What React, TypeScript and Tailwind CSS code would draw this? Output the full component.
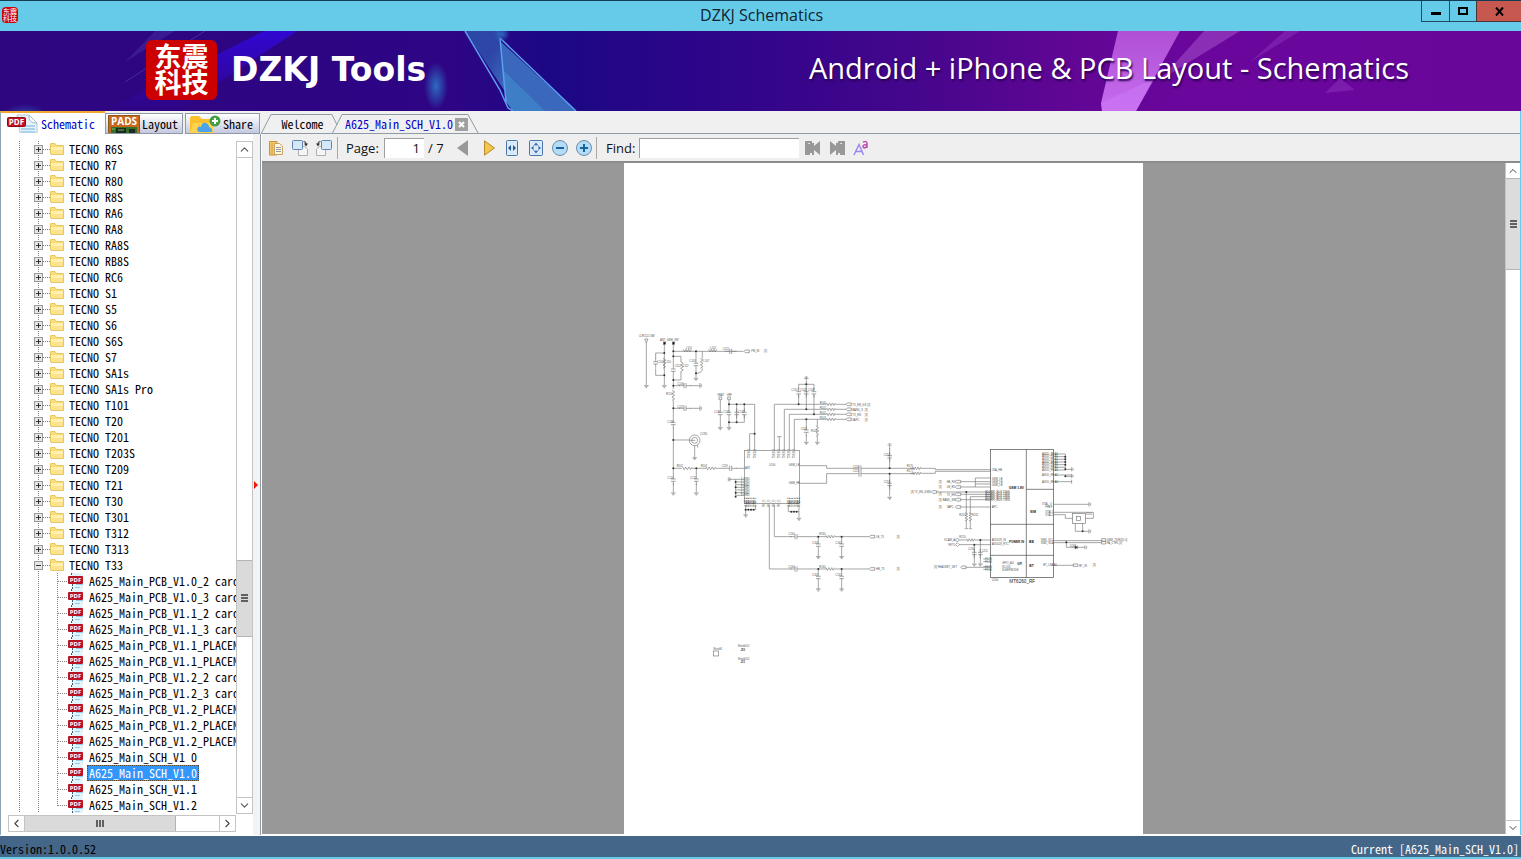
import type { ReactNode } from "react"
import { ChevronDown, ChevronLeft, ChevronRight, ChevronUp } from "lucide-react"

const MONO = "font-['Noto_Sans_Mono_CJK_SC','Liberation_Mono',monospace] text-[12px] leading-4"
const UI = "font-['Open_Sans','Noto_Sans',sans-serif]"

const folders = [
  "R6S", "R7", "R80", "R8S", "RA6", "RA8", "RA8S", "RB8S", "RC6", "S1", "S5", "S6", "S6S", "S7",
  "SA1s", "SA1s Pro", "T101", "T20", "T201", "T203S", "T209", "T21", "T30", "T301", "T312", "T313", "T33",
]

const files = [
  "A625_Main_PCB_V1.0_2 card",
  "A625_Main_PCB_V1.0_3 card",
  "A625_Main_PCB_V1.1_2 card",
  "A625_Main_PCB_V1.1_3 card",
  "A625_Main_PCB_V1.1_PLACEMENT",
  "A625_Main_PCB_V1.1_PLACEMENT",
  "A625_Main_PCB_V1.2_2 card",
  "A625_Main_PCB_V1.2_3 card",
  "A625_Main_PCB_V1.2_PLACEMENT",
  "A625_Main_PCB_V1.2_PLACEMENT",
  "A625_Main_PCB_V1.2_PLACEMENT",
  "A625_Main_SCH_V1 0",
  "A625_Main_SCH_V1.0",
  "A625_Main_SCH_V1.1",
  "A625_Main_SCH_V1.2",
]

function Seal({ small }: { small?: boolean }) {
  return small ? (
    <div className="w-4 h-4 rounded-sm bg-[#c8000a] text-white text-[7px] leading-[7px] text-center pt-px font-['Noto_Sans_CJK_SC',sans-serif]">
      东震<br />科技
    </div>
  ) : (
    <div className="w-[71px] h-[60px] rounded-md bg-[#cc0000] text-white font-bold text-[27px] leading-[26px] text-center pt-[3px] font-['Noto_Sans_CJK_SC',sans-serif]">
      <span className="block">东震</span>
      <span className="block">科技</span>
    </div>
  )
}

function TitleBar() {
  return (
    <header className="flex items-start h-[31px] shrink-0 border-t border-[#123d55] bg-[#66cbe9]">
      <div className="flex-1 pl-[2px] pt-[6px]">
        <Seal small />
      </div>
      <h1 className={`${UI} text-[16px] leading-[29px] text-[#10232e]`}>DZKJ Schematics</h1>
      <div className="flex flex-1 justify-end">
        <button aria-label="Minimize" className="w-[29px] h-[21px] border border-t-0 border-[#234a5e] flex justify-center items-end pb-[6px]">
          <span className="w-[10px] h-[3px] bg-black" />
        </button>
        <button aria-label="Maximize" className="w-[26px] h-[21px] border-b border-[#234a5e] flex justify-center items-center">
          <span className="w-[10px] h-2 border-2 border-black" />
        </button>
        <button aria-label="Close" className="w-[45px] h-[21px] border-b border-l border-[#4a3438] bg-[#c75850] flex justify-center items-center">
          <svg width="9" height="9" viewBox="0 0 9 9" stroke="#000" strokeWidth="2">
            <path d="M1 0.5L8 8.5M8 0.5L1 8.5" />
          </svg>
        </button>
      </div>
    </header>
  )
}

function BannerArt() {
  return (
    <svg className="absolute inset-0 w-full h-full" viewBox="0 31 1521 80" preserveAspectRatio="none" aria-hidden="true">
      <defs>
        <linearGradient id="sky">
          <stop offset="0" stopColor="#2e0680" />
          <stop offset=".3" stopColor="#2d0585" />
          <stop offset=".36" stopColor="#1c0883" />
          <stop offset=".46" stopColor="#2c0589" />
          <stop offset=".6" stopColor="#44068c" />
          <stop offset=".7" stopColor="#600694" />
          <stop offset=".78" stopColor="#6a069c" />
          <stop offset="1" stopColor="#69069a" />
        </linearGradient>
        <linearGradient id="shard" x1="0" y1="0" x2="1" y2="1">
          <stop offset="0" stopColor="#2b58ae" />
          <stop offset=".5" stopColor="#3155b0" />
          <stop offset="1" stopColor="#4088cc" />
        </linearGradient>
        <linearGradient id="beam" x1="0" y1="0" x2="0" y2="1">
          <stop offset="0" stopColor="#3208e6" />
          <stop offset="1" stopColor="#2e0683" />
        </linearGradient>
        <linearGradient id="pink" x1="0" y1="0" x2="0" y2="1">
          <stop offset="0" stopColor="#b050d4" />
          <stop offset="1" stopColor="#c66cf0" />
        </linearGradient>
        <radialGradient id="glow">
          <stop offset="0" stopColor="#2d6bc0" />
          <stop offset="1" stopColor="#2d6bc0" stopOpacity="0" />
        </radialGradient>
      </defs>
      <rect y="31" width="1521" height="80" fill="url(#sky)" />
      <path d="M264 31H297L175 111H105Z" fill="url(#beam)" opacity=".8" />
      <path d="M155 31H175L125 62Z" fill="#4326a0" opacity=".6" />
      <path d="M205 31L125 82" stroke="#5144b8" opacity=".6" />
      <ellipse cx="436" cy="86" rx="12" ry="24" fill="url(#glow)" />
      <ellipse cx="25" cy="114" rx="22" ry="10" fill="url(#glow)" opacity=".6" />
      <path d="M465 31H500L506 93Z" fill="url(#shard)" opacity=".8" />
      <path d="M500 41L576 111H513L506 102Z" fill="#3a68bc" />
      <path d="M503 70L545 111H513L506 102Z" fill="#4088cc" opacity=".7" />
      <path d="M465 31L500 90L508 108L513 111M500 38L506 102M500 38L576 111" stroke="#5c9df0" fill="none" strokeWidth="1.5" />
      <circle cx="502" cy="34" r="8" fill="url(#glow)" />
      <path d="M1118 31H1180L1136 111H1102L1101 103Z" fill="url(#pink)" />
      <path d="M1101 103L1155 78L1136 111H1102Z" fill="#cc7af6" opacity=".5" />
      <path d="M1204 31H1240L1160 80Z" fill="#9338bd" opacity=".8" />
      <path d="M1285 31H1300L1250 62Z" fill="#8328b4" opacity=".7" />
      <path d="M1340 78L1355 90L1325 93Z" fill="#8122b0" opacity=".8" />
    </svg>
  )
}

function Banner() {
  return (
    <section className="relative h-20 shrink-0 overflow-hidden bg-[#2e0680]">
      <BannerArt />
      <div className="relative flex items-center justify-between h-full pl-[146px] pr-[112px] pb-[2px] text-white">
        <div className="flex items-center gap-[14px]">
          <Seal />
          <p className="font-['DejaVu_Sans',sans-serif] font-bold text-[33px] leading-[60px]">DZKJ Tools</p>
        </div>
        <p className={`${UI} text-[29px] leading-[60px] pb-1 [text-shadow:1px_2px_2px_#2a0050]`}>
          Android + iPhone &amp; PCB Layout - Schematics
        </p>
      </div>
    </section>
  )
}

function PdfTabIcon() {
  return (
    <svg width="32" height="19" viewBox="0 0 32 19">
      <path d="M10 1H22L30 9V19H13Z" fill="#e9f2fa" stroke="#b4c8d8" />
      <path d="M22 1C22 6 23 9 30 9Z" fill="#fff" stroke="#9db8cf" />
      <path d="M19 12H28M14 15H28M14 18H28" stroke="#a9d2ee" strokeWidth="2" />
      <rect x=".5" y="3.5" width="18" height="9" rx="1" fill="#c01420" stroke="#8d0b14" />
      <text x="9.5" y="11" fontSize="8" fontWeight="bold" fill="#fff" textAnchor="middle" fontFamily="Open Sans">PDF</text>
    </svg>
  )
}

function PadsIcon() {
  return (
    <svg width="32" height="18" viewBox="0 0 32 18">
      <rect width="32" height="18" fill="#c9661f" />
      <rect x=".5" y=".5" width="31" height="18" fill="none" stroke="#8e5a18" />
      <text x="16" y="10" fontSize="10" fontWeight="bold" fill="#fff" textAnchor="middle" fontFamily="Open Sans">PADS</text>
      <path d="M3 12H29V18H3Z" fill="#35702a" />
      <path d="M8 13H18V18H8ZM21 14H27V18H21Z" fill="#1c2b22" />
      <path d="M4 14H7M10 15H16" stroke="#7fbb55" />
    </svg>
  )
}

function ShareIcon() {
  return (
    <svg width="32" height="18" viewBox="0 0 32 18">
      <path d="M1 18V3Q1 1 3 1H10L13 4H22Q24 4 24 6V18Z" fill="#fbc02d" />
      <path d="M1 18L4 8H24V18Z" fill="#ffd34d" />
      <path d="M10 17Q7 16 9 12Q11 11 12 12Q13 7 17 8Q20 9 20 12Q24 13 23 17Z" fill="#4da3e8" />
      <circle cx="26" cy="6" r="5.5" fill="#43a047" />
      <path d="M26 3V9M23 6H29" stroke="#fff" strokeWidth="2" />
    </svg>
  )
}

function FolderIcon() {
  return (
    <svg width="14" height="12" viewBox="0 0 14 12" className="shrink-0">
      <path d="M.5 11V1Q.5 .5 1 .5H5L6.5 2.500H13Q13.500 2.500 13.500 3V11.500H1Z" fill="#f8dc78" stroke="#e5c566" />
      <path d="M1 4H13V7H1Z" fill="#fff0ae" />
      <path d="M1 7H13V11H1Z" fill="#fbe48c" />
    </svg>
  )
}

function PdfIcon() {
  return (
    <svg width="16" height="16" viewBox="0 0 16 16" className="shrink-0">
      <path d="M4 0H13L15 2V16H4Z" fill="#e3f3fb" />
      <path d="M8 11.500H15M7 14.500H12" stroke="#8fcdee" />
      <path d="M4.500 11V16M3.500 0V3" stroke="#3c5d80" strokeDasharray="2 1" />
      <rect y="3" width="15" height="8" rx="1" fill="#b81225" />
      <text x="7.500" y="9" fontSize="6" fontWeight="bold" fill="#fff" textAnchor="middle" fontFamily="Open Sans">PDF</text>
    </svg>
  )
}

function FolderRow({ name, open }: { name: string; open?: boolean }) {
  return (
    <li role="treeitem" aria-expanded={!!open} className="flex items-center h-4">
      <svg width="50" height="16" viewBox="0 0 50 16" className="shrink-0" aria-hidden="true">
        <path d="M19.500 0V16M38.500 0V16M43 8.500H50" stroke="#808080" strokeDasharray="1 1" />
        <rect x="34.500" y="4.500" width="8" height="8" fill="#e6e6e6" stroke="#9a9a9a" />
        <path d={open ? "M36 8.500H41" : "M36 8.500H41M38.500 6V11"} stroke="#333" />
      </svg>
      <FolderIcon />
      <span className="pl-[5px] whitespace-pre">TECNO {name}</span>
    </li>
  )
}

function FileRow({ name, selected, last }: { name: string; selected: boolean; last: boolean }) {
  return (
    <li role="treeitem" aria-selected={selected} className="flex items-center h-4">
      <svg width="68" height="16" viewBox="0 0 68 16" className="shrink-0" aria-hidden="true">
        <path d="M19.500 0V16M38.500 0V16M58 8.500H68" stroke="#808080" strokeDasharray="1 1" />
        <path d={last ? "M57.500 0V9" : "M57.500 0V16"} stroke="#808080" strokeDasharray="1 1" />
      </svg>
      <PdfIcon />
      <span
        className={
          selected
            ? "ml-[3px] px-px h-4 leading-[14px] whitespace-pre border border-dotted border-[#5a4a30] bg-[#3297fd] text-white"
            : "ml-[3px] px-[2px] whitespace-pre"
        }
      >
        {name}
      </span>
    </li>
  )
}

function SidePanel() {
  return (
    <aside className={`${MONO} flex flex-col w-[253px] shrink-0 border-l border-[#8fa6b8] bg-white text-black`}>
      <div className="flex-1 min-h-0 flex pt-[7px]">
        <ul role="tree" aria-label="Schematics" className="flex-1 min-w-0 overflow-hidden -ml-px">
          {folders.map((f) => (
            <FolderRow key={f} name={f} open={f === "T33"} />
          ))}
          {files.map((f, i) => (
            <FileRow key={i} name={f} selected={f === "A625_Main_SCH_V1.0"} last={i === files.length - 1} />
          ))}
        </ul>
        <div className="w-[17px] flex flex-col border border-[#c4c4c4]">
          <button aria-label="Scroll up" className="h-4 flex items-center justify-center border-b border-[#c4c4c4]">
            <ChevronUp size={13} color="#555" />
          </button>
          <div className="flex-[404]" />
          <div className="flex-[75] flex flex-col items-center justify-center gap-px border-y border-[#b4b4b4] bg-[#dadada]">
            <Grip />
          </div>
          <div className="flex-[161]" />
          <button aria-label="Scroll down" className="h-4 flex items-center justify-center border-t border-[#c4c4c4]">
            <ChevronDown size={13} color="#555" />
          </button>
        </div>
      </div>
      <div className="flex h-[17px] mt-px mb-[3px] ml-[7px] mr-[17px] border border-[#c4c4c4]">
        <button aria-label="Scroll left" className="w-4 flex items-center justify-center border-r border-[#c4c4c4]">
          <ChevronLeft size={13} color="#444" />
        </button>
        <div className="flex-[151] flex items-center justify-center gap-px border-r border-[#b4b4b4] bg-[#dadada]">
          <span className="w-[2px] h-[7px] bg-[#606060]" />
          <span className="w-[2px] h-[7px] bg-[#606060]" />
          <span className="w-[2px] h-[7px] bg-[#606060]" />
        </div>
        <div className="flex-[43]" />
        <button aria-label="Scroll right" className="w-4 flex items-center justify-center border-l border-[#c4c4c4]">
          <ChevronRight size={13} color="#444" />
        </button>
      </div>
    </aside>
  )
}

function Grip() {
  return (
    <>
      <span className="w-[7px] h-[2px] bg-[#606060]" />
      <span className="w-[7px] h-[2px] bg-[#606060]" />
      <span className="w-[7px] h-[2px] bg-[#606060]" />
    </>
  )
}

function SideTabs() {
  return (
    <nav className={`${MONO} flex items-end w-[261px] shrink-0 text-black`} role="tablist" aria-label="Libraries">
      <button role="tab" aria-selected="true" className="flex items-center h-[23px] w-[105px] pl-[6px] gap-[2px] border-t-2 border-l border-t-[#f0a830] border-l-[#8fa6b8] bg-white text-[#0000c8]">
        <PdfTabIcon />
        Schematic
      </button>
      <button role="tab" className="flex items-center h-[21px] w-[78px] mr-[2px] pl-[2px] gap-[2px] border border-[#8f9aa8] bg-linear-to-b from-white to-[#c5c9e0]">
        <PadsIcon />
        Layout
      </button>
      <button role="tab" className="flex items-center h-[21px] w-[75px] pl-[3px] gap-[2px] border border-[#8f9aa8] bg-linear-to-b from-white to-[#c5c9e0]">
        <ShareIcon />
        Share
      </button>
    </nav>
  )
}

function DocTabs() {
  return (
    <nav className={`${MONO} flex flex-1 items-end border-b border-[#8f9ca5] text-black`} role="tablist" aria-label="Documents">
      <svg width="12" height="19" viewBox="0 0 12 19" fill="none" stroke="#8f9ca5">
        <path d="M0.500 19L10 0.500H12" />
      </svg>
      <button role="tab" className="h-[19px] w-[59px] border-t border-[#8f9ca5] bg-[#f0f0f0] text-center">Welcome</button>
      <svg width="12" height="19" viewBox="0 0 12 19" fill="none" stroke="#8f9ca5">
        <path d="M0 .500L5 11M0.500 19L10 0.500H12" />
      </svg>
      <div className="flex items-center h-[19px] pl-px gap-[2px] border-t border-[#8f9ca5]">
        <button role="tab" aria-selected="true" className="text-[#0000c8]">A625_Main_SCH_V1.0</button>
        <button aria-label="Close tab" className="w-[13px] h-[13px] bg-[#a0a0a0] flex items-center justify-center">
          <svg width="7" height="7" viewBox="0 0 7 7" stroke="#fff" strokeWidth="2">
            <path d="M1 1L6 6M6 1L1 6" />
          </svg>
        </button>
      </div>
      <svg width="11" height="19" viewBox="0 0 11 19" fill="none" stroke="#8f9ca5">
        <path d="M0 .500L10 19" />
      </svg>
    </nav>
  )
}

function ToolButton({ label, children }: { label: string; children: ReactNode }) {
  return (
    <button aria-label={label} className="w-6 h-6 flex items-center justify-center">
      {children}
    </button>
  )
}

function Icon({ children }: { children: ReactNode }) {
  return (
    <svg width="16" height="16" viewBox="0 0 16 16" fill="none">
      {children}
    </svg>
  )
}

function RotateArt() {
  return (
    <>
      <path d="M6.500 6.500H12.500L15.500 9V15.500H6.500Z" fill="#f4f4f4" stroke="#b0b0b0" />
      <rect x=".500" y=".500" width="10" height="9" rx="1" fill="#d4e8fa" stroke="#6384ad" />
      <path d="M11.500 1.500Q14.500 1.500 14 4" stroke="#333" />
      <path d="M12 3.500H16L14 6.500Z" fill="#333" />
    </>
  )
}

function Toolbar() {
  return (
    <div className={`${UI} flex items-center h-[29px] pl-[2px] shrink-0 bg-[#efefef] border-b-2 border-[#8c8c8c] text-[13px] leading-5 text-[#111]`}>
      <ToolButton label="Bookmarks">
        <Icon>
          <path d="M1.500 1.500H9V15H1.500Z" fill="#f2c567" stroke="#c9943a" />
          <path d="M4 3V15" stroke="#d8a445" />
          <path d="M6.500 3.500H11.500L14.500 6V14.500H6.500Z" fill="#fff6dd" stroke="#c9a560" />
          <path d="M8 7.500H13M8 9.500H13M8 11.500H13" stroke="#8a9cb4" />
        </Icon>
      </ToolButton>
      <ToolButton label="Rotate right">
        <Icon>
          <RotateArt />
        </Icon>
      </ToolButton>
      <ToolButton label="Rotate left">
        <Icon>
          <g transform="matrix(-1 0 0 1 16 0)">
            <RotateArt />
          </g>
        </Icon>
      </ToolButton>
      <span className="w-px h-[22px] bg-[#b0a8a0] ml-px mr-[8px]" />
      <label htmlFor="page" className="w-[38px]">Page:</label>
      <input id="page" defaultValue="1" className="w-10 h-5 pr-1 text-right bg-white border-t border-l border-[#a0a0a0]" />
      <span className="w-[27px] pl-1 whitespace-pre">/ 7</span>
      <ToolButton label="Previous page">
        <svg width="12" height="16" viewBox="0 0 12 16">
          <path d="M11 0V16L0 8Z" fill="#989898" />
        </svg>
      </ToolButton>
      <span className="w-[2px]" />
      <ToolButton label="Next page">
        <svg width="12" height="16" viewBox="0 0 12 16">
          <path d="M1.500 .800V15.200L11.500 8Z" fill="#f3c64d" stroke="#b98a2a" />
        </svg>
      </ToolButton>
      <span className="flex -ml-px">
        <ToolButton label="Fit width">
          <Icon>
            <rect x="2.500" y=".500" width="11" height="15" rx="1" fill="#d9ebfb" stroke="#4d76a8" />
            <path d="M4 8L7 5V11ZM12 8L9 5V11Z" fill="#24568f" />
          </Icon>
        </ToolButton>
        <ToolButton label="Fit page">
          <Icon>
            <rect x="1.500" y=".500" width="13" height="15" rx="1" fill="#d9ebfb" stroke="#4d76a8" />
            <path d="M8 2.500L10 5H6ZM8 13.500L10 11H6ZM3 8L5.500 6V10ZM13 8L10.500 6V10Z" fill="#3a6ba5" />
            <rect x="5.500" y="5.500" width="5" height="5" stroke="#6a93c2" strokeDasharray="1 1" />
          </Icon>
        </ToolButton>
        <ToolButton label="Zoom out">
          <Icon>
            <circle cx="8" cy="8" r="7.500" fill="#b5dcf7" stroke="#6b8fb0" />
            <path d="M4 8H12" stroke="#15639f" strokeWidth="2" />
          </Icon>
        </ToolButton>
        <ToolButton label="Zoom in">
          <Icon>
            <circle cx="8" cy="8" r="7.500" fill="#b5dcf7" stroke="#6b8fb0" />
            <path d="M4 8H12M8 4V12" stroke="#15639f" strokeWidth="2" />
          </Icon>
        </ToolButton>
      </span>
      <span className="w-px h-[22px] bg-[#b0a8a0] mr-[9px]" />
      <label htmlFor="find" className="w-[33px]">Find:</label>
      <input id="find" className="w-[160px] h-5 px-1 bg-white border-t border-l border-[#a0a0a0]" />
      <span className="w-[2px]" />
      <ToolButton label="Find previous">
        <Icon>
          <path d="M0 1H7V3H9V6L15 1V15L9 10V15H7V13H5V15H0Z" fill="#989898" />
          <path d="M3 3.500H5" stroke="#e0e0e0" />
        </Icon>
      </ToolButton>
      <ToolButton label="Find next">
        <Icon>
          <path d="M16 1H9V3H7V6L1 1V15L7 10V15H9V13H11V15H16Z" fill="#989898" />
          <path d="M11 3.500H13" stroke="#e0e0e0" />
        </Icon>
      </ToolButton>
      <ToolButton label="Match case">
        <Icon>
          <path d="M1 15L6 4.500L10.500 15M3 11.500H9" stroke="#9a86f0" strokeWidth="1.400" />
          <path d="M10 2Q14 .500 14 3.500V8M14 4.500Q10 4.500 10 6.500Q10 8 12 8Q14 7 14 5" stroke="#c050b0" strokeWidth="1.500" />
        </Icon>
      </ToolButton>
    </div>
  )
}

// Schematic symbols, drawn in units of a third of a pixel
function Cap({ x, y, len = 30 }: { x: number; y: number; len?: number }) {
  return <path d={`M${x} ${y}v${len / 2 - 3}M${x - 7} ${y + len / 2 - 3}h14M${x - 7} ${y + len / 2 + 4}h14M${x} ${y + len / 2 + 4}v${len / 2 - 4}`} />
}

function Gnd({ x, y }: { x: number; y: number }) {
  return <path d={`M${x - 7} ${y}h14M${x - 4} ${y + 3}h8M${x - 2} ${y + 6}h4`} />
}

function Res({ x, y, len = 30, vertical }: { x: number; y: number; len?: number; vertical?: boolean }) {
  const s = len / 6
  const z = Array.from({ length: 6 }, (_, i) => (vertical ? `l${i % 2 ? -8 : 8} ${s}` : `l${s} ${i % 2 ? -8 : 8}`)).join("")
  return <path d={`M${vertical ? x - 4 : x} ${vertical ? y : y - 4}${z}`} />
}

function HCap({ x, y }: { x: number; y: number }) {
  return <path d={`M${x - 3} ${y - 8}v16M${x + 3} ${y - 8}v16M${x - 18} ${y}h15M${x + 3} ${y}h15`} />
}

function Port({ x, y }: { x: number; y: number }) {
  return <path d={`M${x} ${y}l4 -4h12v8h-12z`} fill="#fff" />
}

function T({ x, y, s = 8, b, children }: { x: number; y: number; s?: number; b?: boolean; children: string }) {
  return (
    <text x={x} y={y} fontSize={s} fontWeight={b ? "bold" : "normal"} fill={b ? "#222" : "#555"} stroke="none" fontFamily="Liberation Sans">
      {children}
    </text>
  )
}

function Dots({ points }: { points: number[][] }) {
  return (
    <g fill="#333" stroke="none">
      {points.map(([x, y]) => (
        <circle key={`${x}-${y}`} cx={x} cy={y} r="3" />
      ))}
    </g>
  )
}

function AntennaBlock() {
  return (
    <g transform="translate(630 325) scale(.3333)">
      <T x={26} y={37}>CLR1121-SM</T>
      <path d="M44 42h10l-5 12zM49 54V180" />
      <Gnd x={49} y={182} />
      <T x={90} y={47}>ANT_GSM_SW</T>
      <path d="M103 54V180M77 84H103M77 84V100M77 130V151H103M130 54V120M130 150V192M130 79H340M130 94H153V110M153 140V165H130" />
      <rect x="100" y="51" width="7" height="7" fill="#111" />
      <rect x="127" y="51" width="7" height="7" fill="#111" />
      <Cap x={77} y={98} />
      <Res x={103} y={100} vertical />
      <Cap x={130} y={120} />
      <Res x={156} y={110} vertical />
      <Gnd x={103} y={182} />
      <Res x={160} y={77} len={24} />
      <Res x={236} y={77} len={24} />
      <HCap x={302} y={79} />
      <Port x={342} y={79} />
      <T x={364} y={82}>FM_IN</T>
      <T x={402} y={82}>[3]</T>
      <path d="M198 79V103M198 133V158M217 79V100M217 130Q217 145 198 145" />
      <Cap x={198} y={103} />
      <Res x={215} y={100} vertical />
      <Gnd x={198} y={160} />
      <T x={168} y={73}>L101</T>
      <T x={240} y={73}>L102</T>
      <T x={278} y={75}>C101</T>
      <T x={82} y={115}>C110</T>
      <T x={106} y={115}>L110</T>
      <T x={134} y={127}>C112</T>
      <T x={158} y={127}>L112</T>
      <T x={178} y={112}>C105</T>
      <T x={220} y={112}>L107</T>
      <path d="M130 182H150M210 174v16M214 178v8M130 250H150M210 242v16M214 246v8M180 182H210M180 250H210" />
      <HCap x={165} y={182} />
      <HCap x={165} y={250} />
      <T x={142} y={180}>C106</T>
      <T x={142} y={248}>C117</T>
      <Res x={130} y={196} vertical />
      <T x={108} y={210}>R110</T>
      <path d="M130 226V280M130 308V450M130 430H155M130 345H180" />
      <Cap x={130} y={280} />
      <T x={112} y={293}>C118</T>
      <circle cx="194" cy="346" r="16" />
      <circle cx="194" cy="346" r="9" />
      <path d="M180 346h16M194 362V396M203 360v8" />
      <T x={210} y={331}>CON1</T>
      <Gnd x={194} y={398} />
      <Res x={158} y={430} len={28} />
      <Res x={228} y={430} len={28} />
      <path d="M186 430H228M256 430H285M199 430V450" />
      <HCap x={302} y={430} />
      <path d="M318 430H343M130 475V502M199 475V502" />
      <T x={140} y={425}>R102</T>
      <T x={212} y={425}>R103</T>
      <T x={275} y={425}>C119</T>
      <Cap x={130} y={450} />
      <Cap x={199} y={450} />
      <T x={112} y={463}>C120</T>
      <T x={180} y={463}>C121</T>
      <Gnd x={130} y={504} />
      <Gnd x={199} y={504} />
      <Dots points={[[130, 79], [130, 94], [130, 165], [130, 182], [103, 84], [103, 151], [198, 79], [198, 145], [130, 250], [130, 345], [130, 430], [199, 430]]} />
    </g>
  )
}

function TransceiverBlock() {
  return (
    <g transform="translate(630 325) scale(.3333)">
      <rect x="343" y="376" width="166" height="159" />
      <T x={262} y={213}>VBAT</T>
      <T x={290} y={213}>VRF</T>
      <path d="M271 224V250M271 280V306M297 224V250M297 238H374V376M297 280V306M297 292H343V270M320 238V292M343 238V260M374 326H359V376" />
      <path d="M267 216h8v8h-8zM293 216h8v8h-8z" />
      <Cap x={271} y={250} />
      <Cap x={297} y={250} />
      <Cap x={320} y={250} />
      <Cap x={343} y={250} />
      <Gnd x={271} y={308} />
      <Gnd x={297} y={308} />
      <T x={252} y={263}>C130</T>
      <T x={280} y={263}>C131</T>
      <T x={324} y={263}>C132</T>
      <path d="M529 156V178M506 178H552M506 178V194M552 178V194M506 210V238M529 178V253M552 210V268" />
      <path d="M522 160h14M525 156h8" />
      <Cap x={506} y={188} />
      <Cap x={529} y={188} />
      <Cap x={552} y={188} />
      <T x={484} y={199}>C141</T>
      <T x={510} y={199}>C142</T>
      <T x={534} y={199}>C143</T>
      <path d="M433 376V238H590M463 376V253H590M478 376V268H590M493 376V283H590M448 376V335M441 335h14" />
      {[238, 253, 268, 283].map((y, i) => (
        <g key={y}>
          <Res x={590} y={y} len={26} />
          <path d={`M616 ${y}H648`} />
          <Port x={648} y={y} />
          <T x={569} y={y - 1}>{`R14${i}`}</T>
          <T x={i === 0 ? 712 : 704} y={y + 4}>[3]</T>
        </g>
      ))}
      <T x={667} y={242}>TX_EN_GS</T>
      <T x={667} y={257}>BAND_S</T>
      <T x={667} y={272}>TX_EN</T>
      <T x={667} y={287}>VAPC</T>
      <path d="M529 283V305M529 330V350M562 283V305M562 332V350" />
      <Cap x={529} y={303} />
      <Res x={562} y={303} vertical />
      <T x={512} y={314}>C144</T>
      <T x={543} y={320}>R144</T>
      <Gnd x={529} y={352} />
      <Gnd x={562} y={352} />
      <T x={417} y={422}>U100</T>
      <T x={476} y={422}>GSM_LB</T>
      <T x={476} y={476}>GSM_HB</T>
      <T x={345} y={433}>ANT</T>
      {[358, 374, 433, 448, 463, 478, 493].map((x) => (
        <text key={x} transform={`translate(${x + 3} 400) rotate(-90)`} fontSize="8" fill="#555" stroke="none" fontFamily="Liberation Sans">TXEN 1</text>
      ))}
      {[403, 418, 433, 448].map((x) => (
        <text key={x} transform={`translate(${x + 3} 545) rotate(-90)`} fontSize="8" fill="#555" stroke="none" fontFamily="Liberation Sans">RF_O</text>
      ))}
      {[347, 354, 361, 368, 375, 476, 484, 492, 500, 507].map((x) => (
        <text key={x} transform={`translate(${x + 3} 545) rotate(-90)`} fontSize="9" fill="#333" stroke="none" fontFamily="Liberation Sans">GND 2</text>
      ))}
      {[463, 471, 479, 487, 495, 503, 511].map((y) => (
        <g key={y}>
          <path d={`M317 ${y}H343`} />
          <T x={332} y={y + 3} s={9}>1 GND</T>
        </g>
      ))}
      <path d="M297 463H317V515M295 457v12M300 457v12M347 540V570M347 554H377V540M475 540V560H507M507 540V578" />
      <Gnd x={347} y={570} />
      <Gnd x={507} y={580} />
      <path d="M509 422H590V430H687M509 475H590V446H687" />
      <path d="M687 421v34M693 421v34" />
      <path d="M693 430H852M693 446H852M779 370V430M779 446V515" />
      <T x={668} y={429}>C150</T>
      <T x={668} y={442}>C151</T>
      <path d="M773 360h12M776 356h6M779 360v14" />
      <Cap x={779} y={380} />
      <Cap x={779} y={463} />
      <T x={761} y={392}>C152</T>
      <T x={761} y={474}>C153</T>
      <Gnd x={779} y={517} />
      <path d="M418 540V732H485M433 540V635H485" />
      {[635, 732].map((y) => (
        <g key={y}>
          <HCap x={498} y={y} />
          <path d={`M516 ${y}H590M614 ${y}H718M565 ${y}V${y + 10}M565 ${y + 40}V${y + 60}M635 ${y}V${y + 10}M635 ${y + 40}V${y + 60}`} />
          <Res x={588} y={y} len={26} />
          <Cap x={565} y={y + 10} />
          <Cap x={635} y={y + 10} />
          <Gnd x={565} y={y + 60} />
          <Gnd x={635} y={y + 60} />
          <Port x={718} y={y} />
          <T x={475} y={y - 4}>C160</T>
          <T x={568} y={y - 4}>R160</T>
          <T x={546} y={y + 22}>C161</T>
          <T x={616} y={y + 22}>C162</T>
          <T x={738} y={y + 4}>{y === 635 ? "LB_TX" : "HB_TX"}</T>
          <T x={800} y={y + 4}>[3]</T>
        </g>
      ))}
      <T x={250} y={975}>Shield1</T>
      <rect x="250" y="978" width="15" height="15" />
      <T x={323} y={967}>Shield101</T>
      <T x={332} y={977} b>J10</T>
      <T x={323} y={1004}>Shield102</T>
      <T x={332} y={1014} b>J11</T>
      <Dots points={[[297, 238], [320, 238], [343, 238], [374, 326], [297, 292], [320, 292], [529, 178], [506, 238], [529, 253], [552, 268], [529, 283], [317, 471], [317, 487], [317, 503], [317, 515], [347, 554], [355, 554], [363, 554], [371, 554], [484, 560], [492, 560], [500, 560], [779, 430], [779, 446], [565, 635], [635, 635], [565, 732], [635, 732]]} />
    </g>
  )
}

function BasebandBlock() {
  return (
    <g transform="translate(890 430) scale(.3333)">
      <path d="M60 115H72M60 130H72M92 115H136V119H302M92 130H136V124H302" />
      <Res x={68} y={115} len={24} />
      <Res x={68} y={130} len={24} />
      <T x={50} y={112}>R170</T>
      <T x={50} y={127}>R171</T>
      <g stroke="#444">
        <rect x="301" y="58" width="190" height="385" />
        <path d="M409 58V443M409 178H491M301 283H491M301 376H491" />
      </g>
      <T x={356} y={178} s={10} b>GSM 1.8V</T>
      <T x={420} y={249} s={10} b>SIM</T>
      <T x={357} y={338} s={9} b>POWER IN</T>
      <T x={417} y={340} s={10} b>BB</T>
      <T x={382} y={406} b>GPI</T>
      <T x={418} y={412} s={10} b>BT</T>
      <text x="358" y="459" fontSize="14" fill="#222" stroke="none" fontFamily="Liberation Sans">MT6260_RF</text>
      <T x={306} y={453}>U200</T>
      {[155, 171, 193, 209, 231].map((y, i) => (
        <g key={y}>
          <path d={`M212 ${y}H301`} />
          <Port x={196} y={y} />
          <T x={146} y={y + 3}>[3]</T>
          <T x={i === 3 ? 158 : 170} y={y + 4}>{["HB_RX", "LB_RX", "TX_EN", "BAND_SW", "VAPC"][i]}</T>
        </g>
      ))}
      <Port x={124} y={186} />
      <T x={62} y={189}>[3] TX_EN_GSM</T>
      <path d="M140 186H301M256 144H301M256 162H301M256 144V171M229 186V250M241 200V250M241 200H301M229 270V294M241 270V294M224 296h10M236 296h10" />
      <Res x={229} y={248} len={24} vertical />
      <Res x={241} y={248} len={24} vertical />
      <T x={208} y={258}>R201</T>
      <T x={246} y={258}>R202</T>
      {[122, 151, 159, 168].map((y) => (
        <T key={y} x={305} y={y}>{y < 130 ? "LNA_HB" : "GSM_LB"}</T>
      ))}
      {[189, 195, 201, 207, 213].map((y) => (
        <T key={y} x={286} y={y}>B10 BPI_BUS TXEN</T>
      ))}
      <T x={305} y={234}>APC</T>
      {[72, 80, 88, 96, 104, 112, 120].map((y) => (
        <g key={y}>
          <path d={`M491 ${y}H526`} />
          <T x={456} y={y + 2}>AVDD_RF A1</T>
        </g>
      ))}
      {[135, 155].map((y) => (
        <g key={y}>
          <path d={`M491 ${y}H545`} />
          <T x={456} y={y + 3}>AVDD_RF A2</T>
        </g>
      ))}
      <path d="M526 72V118H545M545 112v12M549 114v8M545 132v12M549 134v8M545 149v12M526 135V139H545M491 223H597M597 216v14M602 219v8M491 247H610V265H587M491 254H526V265H548" />
      <T x={456} y={226}>XTAL_O</T>
      <T x={466} y={234}>FREF</T>
      <T x={466} y={249}>XTAL1</T>
      <T x={466} y={257}>XTAL2</T>
      <rect x="548" y="250" width="39" height="30" />
      <rect x="559" y="259" width="13" height="12" />
      <T x={588} y={256}>X201</T>
      <path d="M556 280V304M578 280V304H597M556 304H578M597 297v14M602 300v8" />
      <path d="M196 330l6 -6l6 6l-6 6zM196 344l6 -6l6 6l-6 6zM208 330H230M254 330H301M208 344H301M253 344V400M271 330V400" />
      <Res x={230} y={330} len={24} />
      <T x={162} y={333}>VCAM_A</T>
      <T x={174} y={347}>VRTC</T>
      <T x={208} y={324}>R210</T>
      <Cap x={253} y={355} />
      <Cap x={271} y={355} />
      <T x={234} y={360}>C210</T>
      <T x={275} y={366}>C211</T>
      <Gnd x={253} y={402} />
      <Gnd x={271} y={402} />
      <T x={305} y={332}>AVDD28_IN</T>
      <T x={305} y={346}>AVDD28_RTC</T>
      {[387, 395, 410, 418].map((y) => (
        <g key={y}>
          <path d={`M280 ${y}H301`} />
          <T x={286} y={y + 4}>F1 IN</T>
        </g>
      ))}
      <T x={336} y={401}>GPIO_AU</T>
      <T x={336} y={415}>SCLK0</T>
      <T x={336} y={423}>SLEEPMODE</T>
      <T x={132} y={415}>[3] HEADSET_DET</T>
      <Port x={212} y={412} />
      <path d="M228 412H301M491 332H635M491 338H635M529 335V352H585M585 346v12M590 348v8M635 326h12v8h-12zM635 334h12v8h-12z" />
      <path d="M555 347l8 5l-8 5zM563 347v10" fill="#111" />
      <T x={452} y={333}>SIM1_SCL</T>
      <T x={452} y={341}>SIM1_SDA</T>
      <T x={540} y={350}>D201</T>
      <T x={650} y={333}>GSM_TX/RX[1:4]</T>
      <T x={650} y={341}>PA_CTRL [3]</T>
      <path d="M491 406H550M550 402h14v7h-14z" />
      <T x={460} y={409}>BT_LNA A5</T>
      <T x={568} y={410}>BT_IN</T>
      <T x={608} y={409}>[3]</T>
      <Dots points={[[229, 186], [271, 330], [253, 344], [526, 80], [526, 88], [526, 96], [526, 104], [526, 118], [526, 139], [529, 337], [578, 304]]} />
    </g>
  )
}

function Viewer() {
  return (
    <div className="flex flex-1 min-h-0 bg-[#989898] border-b border-white">
      <main className="flex flex-1 min-w-0 justify-center overflow-hidden">
        <div className="w-[519px] bg-white">
          <svg className="w-full" viewBox="624 163 519 670" fill="none" stroke="#777" strokeWidth="2" role="img" aria-label="A625 main board schematic">
            <AntennaBlock />
            <TransceiverBlock />
            <BasebandBlock />
          </svg>
        </div>
      </main>
      <div className="w-[15px] flex flex-col bg-white border-l border-[#c4c4c4]">
        <button aria-label="Scroll page up" className="h-[15px] flex items-center justify-center">
          <ChevronUp size={12} color="#444" />
        </button>
        <div className="flex-[90] flex flex-col items-center justify-center gap-px border-y border-[#b4b4b4] bg-[#dcdcdc]">
          <Grip />
        </div>
        <div className="flex-[550]" />
        <button aria-label="Scroll page down" className="h-[14px] flex items-center justify-center border-t border-[#c4c4c4]">
          <ChevronDown size={12} color="#444" />
        </button>
      </div>
    </div>
  )
}

export default function App() {
  return (
    <div className="flex flex-col h-screen overflow-hidden bg-[#66cbe9]">
      <TitleBar />
      <Banner />
      <div className="flex h-[23px] shrink-0 mr-px bg-[#f0f0f0]">
        <SideTabs />
        <DocTabs />
      </div>
      <div className="flex flex-1 min-h-0 mr-px bg-white">
        <SidePanel />
        <div className="w-2 shrink-0 flex items-center bg-[#f3f3f3] border-r border-[#8f9ca5]">
          <svg width="6" height="8" viewBox="0 0 6 8">
            <path d="M1 0L5 4L1 8Z" fill="#f01808" />
          </svg>
        </div>
        <div className="flex flex-col flex-1 min-w-0 pl-px">
          <Toolbar />
          <Viewer />
        </div>
      </div>
      <footer className={`${MONO} flex justify-between items-end h-[22px] shrink-0 mb-[2px] border-t border-white bg-[#446688]`}>
        <span className="text-black">Version:1.0.0.52</span>
        <span className="text-white pr-[2px]">Current [A625_Main_SCH_V1.0]</span>
      </footer>
    </div>
  )
}
